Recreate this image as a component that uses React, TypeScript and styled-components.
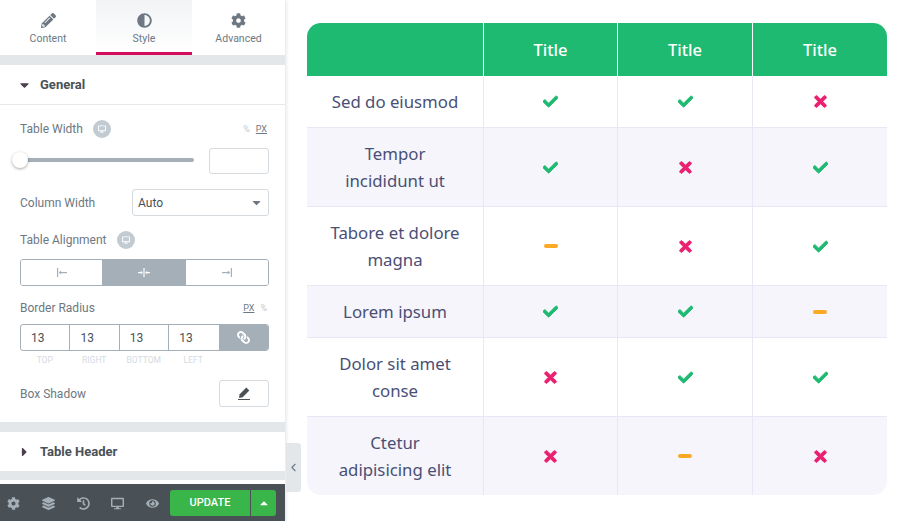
import React from "react";
import styled, { createGlobalStyle } from "styled-components";
import {
  FaPencilAlt, FaAdjust, FaCog, FaCheck, FaTimes, FaCaretDown, FaCaretRight, FaCaretUp,
  FaLayerGroup, FaHistory, FaDesktop, FaEye, FaLink,
} from "react-icons/fa";
import { FiChevronLeft } from "react-icons/fi";

const Global = createGlobalStyle`
  html, body { margin: 0; padding: 0; background: #fff; }
  body { font-family: Roboto, "Liberation Sans", sans-serif; width: 906px; height: 521px; overflow: hidden; }
  * { box-sizing: border-box; }
`;

const Page = styled.div`
  position: relative;
  display: flex;
  width: 906px;
  height: 521px;
  overflow: hidden;
`;
const Side = styled.aside`
  width: 285px;
  height: 521px;
  flex: none;
  display: flex;
  flex-direction: column;
  background: #fff;
  box-shadow: 1px 0 4px rgba(0, 0, 0, 0.12);
`;
const Tabs = styled.div`
  display: grid;
  grid-template-columns: 96px 96px 93px;
  height: 55px;
  flex: none;
`;
const Tab = styled.div<{ $active?: boolean }>`
  display: flex;
  flex-direction: column;
  align-items: center;
  padding-top: 13px;
  color: #6d7882;
  font-size: 10.5px;
  border-bottom: 3px solid ${(p) => (p.$active ? "#d30c5c" : "transparent")};
  background: ${(p) => (p.$active ? "linear-gradient(#f1f3f5, #ffffff)" : "#fff")};
  svg { font-size: 15px; margin-bottom: 4px; color: #6d7882; }
  span { line-height: 13px; }
`;
const Band = styled.div<{ $h: number }>`
  height: ${(p) => p.$h}px;
  flex: none;
  background: #e4e7ea;
`;
const SectionHead = styled.div<{ $h: number; $line?: boolean }>`
  height: ${(p) => p.$h}px;
  flex: none;
  display: flex;
  align-items: center;
  padding-left: 20px;
  font-size: 13px;
  font-weight: 700;
  color: #495157;
  border-bottom: ${(p) => (p.$line ? "1px solid #e6e9ec" : "none")};
  svg { width: 9px; margin-right: 11px; font-size: 14px; color: #4a3f4a; }
`;
const Body = styled.div`
  flex: none;
  height: 317px;
  padding: 0 16px 0 20px;
  display: flex;
  flex-direction: column;
`;
const Row = styled.div<{ $h: number; $pt?: number }>`
  height: ${(p) => p.$h}px;
  padding-top: ${(p) => p.$pt ?? 0}px;
  flex: none;
  display: flex;
  align-items: center;
  justify-content: space-between;
`;
const Label = styled.span`
  font-size: 12px;
  color: #6d7882;
  display: flex;
  align-items: center;
  gap: 10px;
`;
const DeviceDot = styled.i`
  width: 18px;
  height: 18px;
  border-radius: 50%;
  background: #c2cbd2;
  display: inline-flex;
  align-items: center;
  justify-content: center;
  color: #fff;
  font-size: 8px;
`;
const Units = styled.span`
  display: flex;
  gap: 6px;
  font-size: 9px;
  align-items: center;
  padding-right: 2px;
`;
const Unit = styled.span<{ $on?: boolean }>`
  color: ${(p) => (p.$on ? "#6d7882" : "#c2cbd2")};
  text-decoration: ${(p) => (p.$on ? "underline" : "none")};
`;
const Track = styled.div`
  position: relative;
  width: 174px;
  height: 4px;
  border-radius: 2px;
  background: #a4afb7;
  margin-top: -2px;
`;
const Knob = styled.div`
  position: absolute;
  left: -8px;
  top: -6px;
  width: 16px;
  height: 16px;
  border-radius: 50%;
  background: #fff;
  box-shadow: 0 1px 3px rgba(0, 0, 0, 0.35);
`;
const NumBox = styled.div`
  width: 60px;
  height: 26px;
  border: 1px solid #d5dadf;
  border-radius: 3px;
`;
const SelectBox = styled.div`
  width: 137px;
  height: 27px;
  border: 1px solid #d5dadf;
  border-radius: 3px;
  display: flex;
  align-items: center;
  justify-content: space-between;
  padding: 0 5px 0 5px;
  font-size: 12px;
  color: #495157;
  svg { font-size: 13px; color: #6d7882; }
`;
const Choices = styled.div`
  width: 249px;
  height: 27px;
  display: grid;
  grid-template-columns: 81px 84px 1fr;
  border: 1px solid #a4afb7;
  border-radius: 3px;
  overflow: hidden;
`;
const Choice = styled.div<{ $on?: boolean }>`
  display: flex;
  align-items: center;
  justify-content: center;
  background: ${(p) => (p.$on ? "#a4afb7" : "#fff")};
  color: ${(p) => (p.$on ? "#fff" : "#a4afb7")};
`;
const Dims = styled.div`
  width: 249px;
  height: 27px;
  display: flex;
  border: 1px solid #a4afb7;
  border-radius: 3px;
  overflow: hidden;
`;
const DimCell = styled.div`
  width: 49.4px;
  flex: none;
  border-right: 1px solid #a4afb7;
  font-size: 12px;
  color: #495157;
  display: flex;
  align-items: center;
  padding-left: 10px;
  &:nth-child(4) { border-right: none; }
`;
const DimLink = styled.div`
  flex: 1;
  background: #a4afb7;
  color: #fff;
  display: flex;
  align-items: center;
  justify-content: center;
  font-size: 13px;
  svg { transform: scaleX(-1); }
`;
const DimLabels = styled.div`
  width: 200px;
  display: flex;
  height: 10px;
  flex: none;
  align-items: center;
`;
const DimLabel = styled.span`
  width: 49.5px;
  text-align: center;
  font-size: 8.5px;
  color: #d5dadf;
  text-transform: uppercase;
`;
const EditBtn = styled.div`
  width: 50px;
  height: 27px;
  border: 1px solid #d5dadf;
  border-radius: 3px;
  display: flex;
  align-items: center;
  justify-content: center;
  color: #495157;
`;
const Spacer = styled.div`
  height: 4px;
  flex: none;
  background: #fff;
`;
const Footer = styled.div`
  flex: 1;
  background: #495157;
  display: flex;
  align-items: center;
  padding: 0 9px 0 7px;
  color: #a4afb7;
`;
const FootIcons = styled.div`
  display: flex;
  flex: 1;
  justify-content: space-between;
  padding-right: 11px;
  font-size: 13px;
  svg { display: block; margin-top: 1px; }
`;
const Update = styled.div`
  width: 106px;
  height: 26px;
  display: flex;
  background: #39b54a;
  border-radius: 3px;
  color: #fff;
  font-size: 11px;
  font-weight: 500;
`;
const UpdateText = styled.span`
  width: 81px;
  border-right: 1px solid #495157;
  display: flex;
  align-items: center;
  justify-content: center;
`;
const UpdateArrow = styled.span`
  flex: 1;
  display: flex;
  align-items: center;
  justify-content: center;
  font-size: 12px;
`;
const Collapse = styled.div`
  position: absolute;
  left: 286px;
  top: 443px;
  width: 15px;
  height: 49px;
  background: #e4e7ea;
  border-radius: 0 3px 3px 0;
  display: flex;
  align-items: center;
  justify-content: center;
  color: #6d7882;
  font-size: 13px;
`;
const Main = styled.main`
  flex: 1;
  padding: 23px 19px 0 22px;
`;
const Grid = styled.div`
  width: 580px;
  border-radius: 14px;
  overflow: hidden;
  font-family: "Noto Sans", "Open Sans", sans-serif;
`;
const TRow = styled.div<{ $h: number; $alt?: boolean; $head?: boolean; $last?: boolean }>`
  display: grid;
  grid-template-columns: 177px 134px 135px 134px;
  height: ${(p) => p.$h}px;
  background: ${(p) => (p.$head ? "#1eba71" : p.$alt ? "#f5f5fb" : "#fff")};
  border-bottom: ${(p) => (p.$head || p.$last ? "none" : "1px solid #e9e7f6")};
`;
const Cell = styled.div<{ $head?: boolean }>`
  display: flex;
  align-items: center;
  justify-content: center;
  text-align: center;
  border-right: 1px solid ${(p) => (p.$head ? "#fff" : "#e9e7f6")};
  color: ${(p) => (p.$head ? "#fff" : "#4a4f76")};
  font-size: ${(p) => (p.$head ? 16.5 : 16.8)}px;
  font-weight: ${(p) => (p.$head ? 500 : 400)};
  line-height: 27px;
  padding: 0 10px;
  &:last-child { border-right: none; }
`;
const Dash = styled.span`
  width: 14px;
  height: 4px;
  border-radius: 2px;
  background: #fbaa25;
`;
const BoldCheck = styled(FaCheck)`
  stroke: #1eba71;
  stroke-width: 30px;
`;
const BoldCross = styled(FaTimes)`
  stroke: #ea2070;
  stroke-width: 30px;
`;

type Mark = "y" | "n" | "d";
const rows: { label: React.ReactNode; h: number; marks: Mark[] }[] = [
  { label: "Sed do eiusmod", h: 52, marks: ["y", "y", "n"] },
  { label: <>Tempor<br />incididunt ut</>, h: 79, marks: ["y", "n", "y"] },
  { label: <>Tabore et dolore<br />magna</>, h: 79, marks: ["d", "n", "y"] },
  { label: "Lorem ipsum", h: 52, marks: ["y", "y", "d"] },
  { label: <>Dolor sit amet<br />conse</>, h: 79, marks: ["n", "y", "y"] },
  { label: <>Ctetur<br />adipisicing elit</>, h: 78, marks: ["n", "d", "n"] },
];

const MarkIcon = ({ m }: { m: Mark }) =>
  m === "y" ? <BoldCheck size={15} color="#1eba71" /> : m === "n" ? <BoldCross size={17} color="#ea2070" /> : <Dash />;

const AlignIcon = ({ kind }: { kind: "l" | "c" | "r" }) => (
  <svg width="12" height="9" viewBox="0 0 12 9" fill="currentColor">
    {kind === "l" && <><rect x="1" y="0" width="1.2" height="9" /><rect x="4" y="4" width="7" height="1.2" /><path d="M2.8 4.6l2.4-2v4z" /></>}
    {kind === "c" && <><rect x="5.4" y="0" width="1.2" height="9" /><rect x="0" y="4" width="4" height="1.2" /><rect x="8" y="4" width="4" height="1.2" /><path d="M4.8 4.6l-2-1.8v3.6zM7.2 4.6l2-1.8v3.6z" /></>}
    {kind === "r" && <><rect x="9.8" y="0" width="1.2" height="9" /><rect x="1" y="4" width="7" height="1.2" /><path d="M9.2 4.6l-2.4-2v4z" /></>}
  </svg>
);

const UnderlinedPencil = () => (
  <svg width="12" height="13" viewBox="0 0 12 13" fill="currentColor">
    <path d="M8.3 0.6l3 3-6.6 6.6-3.7 0.7 0.7-3.7z" />
    <rect x="0" y="12" width="12" height="1" />
  </svg>
);

export default function App() {
  return (
    <Page>
      <Global />
      <Side>
        <Tabs>
          <Tab><FaPencilAlt /><span>Content</span></Tab>
          <Tab $active><FaAdjust /><span>Style</span></Tab>
          <Tab><FaCog /><span>Advanced</span></Tab>
        </Tabs>
        <Band $h={10} />
        <SectionHead $h={40} $line><FaCaretDown />General</SectionHead>
        <Body>
          <Row $h={43} $pt={4}>
            <Label>Table Width <DeviceDot><FaDesktop /></DeviceDot></Label>
            <Units><Unit>%</Unit><Unit $on>PX</Unit></Units>
          </Row>
          <Row $h={26}>
            <Track><Knob /></Track>
            <NumBox />
          </Row>
          <Row $h={57}>
            <Label>Column Width</Label>
            <SelectBox>Auto<FaCaretDown /></SelectBox>
          </Row>
          <Row $h={18}>
            <Label>Table Alignment <DeviceDot><FaDesktop /></DeviceDot></Label>
          </Row>
          <Row $h={47}>
            <Choices>
              <Choice><AlignIcon kind="l" /></Choice>
              <Choice $on><AlignIcon kind="c" /></Choice>
              <Choice><AlignIcon kind="r" /></Choice>
            </Choices>
          </Row>
          <Row $h={24}>
            <Label>Border Radius</Label>
            <Units><Unit $on>PX</Unit><Unit>%</Unit></Units>
          </Row>
          <Row $h={35}>
            <Dims>
              <DimCell>13</DimCell><DimCell>13</DimCell><DimCell>13</DimCell><DimCell>13</DimCell>
              <DimLink><FaLink /></DimLink>
            </Dims>
          </Row>
          <DimLabels>
            <DimLabel>Top</DimLabel><DimLabel>Right</DimLabel><DimLabel>Bottom</DimLabel><DimLabel>Left</DimLabel>
          </DimLabels>
          <Row $h={57}>
            <Label>Box Shadow</Label>
            <EditBtn><UnderlinedPencil /></EditBtn>
          </Row>
        </Body>
        <Band $h={10} />
        <SectionHead $h={39}><FaCaretRight />Table Header</SectionHead>
        <Band $h={9} />
        <Spacer />
        <Footer>
          <FootIcons>
            <FaCog /><FaLayerGroup /><FaHistory /><FaDesktop /><FaEye />
          </FootIcons>
          <Update>
            <UpdateText>UPDATE</UpdateText>
            <UpdateArrow><FaCaretUp /></UpdateArrow>
          </Update>
        </Footer>
      </Side>
      <Collapse><FiChevronLeft /></Collapse>
      <Main>
        <Grid>
          <TRow $h={53} $head>
            <Cell $head /><Cell $head>Title</Cell><Cell $head>Title</Cell><Cell $head>Title</Cell>
          </TRow>
          {rows.map((r, i) => (
            <TRow key={i} $h={r.h} $alt={i % 2 === 1} $last={i === rows.length - 1}>
              <Cell>{r.label}</Cell>
              {r.marks.map((m, j) => <Cell key={j}><MarkIcon m={m} /></Cell>)}
            </TRow>
          ))}
        </Grid>
      </Main>
    </Page>
  );
}
